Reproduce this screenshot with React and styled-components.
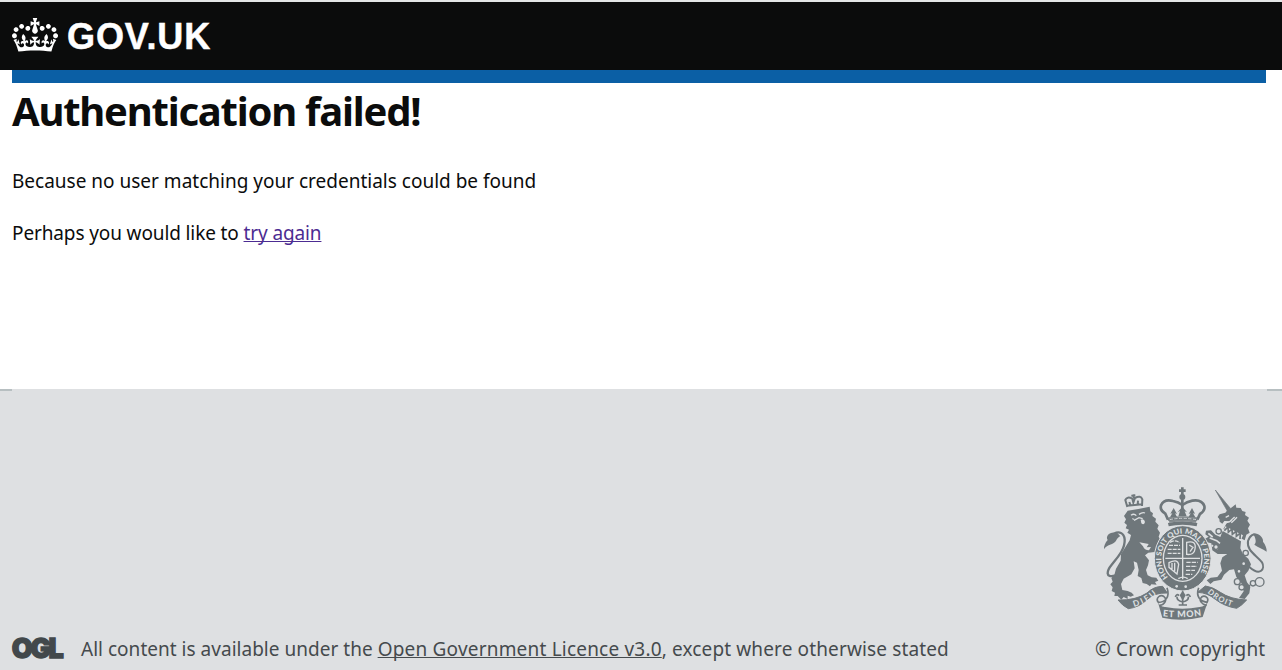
import React from "react";
import styled, { createGlobalStyle } from "styled-components";

const Global = createGlobalStyle`
  body { margin: 0; background: #fff; font-family: "Noto Sans", sans-serif; overflow: hidden; }
`;
const Header = styled.header`
  box-sizing: border-box;
  height: 70px;
  padding-left: 12px;
  display: flex;
  align-items: center;
  gap: 9px;
  background: #0b0c0c;
  border-top: 2px solid #e4e6e6;
`;
const CrownIcon = styled.svg`
  width: 46px;
  height: 34px;
  fill: #fff;
  margin-top: -3px;
`;
const LogoText = styled.span`
  padding-top: 1px;
  font: bold 36px/40px "Liberation Sans", Arial, sans-serif;
  letter-spacing: 0.9px;
  -webkit-text-stroke: 0.5px #fff;
  color: #fff;
`;
const Bar = styled.div`
  height: 13px;
  margin: 0 16px 0 12px;
  background: #0b5fa5;
`;
const Main = styled.main`
  height: 306px;
  padding: 0 12px;
  box-sizing: border-box;
  color: #0b0c0c;
`;
const Title = styled.h1`
  margin: 0;
  font-size: 40px;
  line-height: 56px;
  font-weight: 700;
  letter-spacing: -1.23px;
`;
const Para = styled.p`
  margin: ${(p) => p.$top}px 0 0;
  font-size: 19px;
  line-height: 26px;
  letter-spacing: ${(p) => p.$spacing || 0}px;
`;
const Link = styled.a`
  color: ${(p) => p.$color || "#4c2c92"};
  letter-spacing: ${(p) => (p.$spacing === undefined ? "inherit" : `${p.$spacing}px`)};
  text-decoration: underline;
  text-decoration-thickness: 1px;
  text-decoration-skip-ink: none;
`;
const Footer = styled.footer`
  box-sizing: border-box;
  height: 281px;
  background: #dee0e2;
  display: flex;
  flex-direction: column;
`;
const Edge = styled.div`
  height: 2px;
  display: flex;
  justify-content: space-between;
`;
const EdgePiece = styled.span`
  width: ${(p) => p.$width}px;
  background: #b7bfc1;
`;
const FooterRow = styled.div`
  flex: 1;
  display: flex;
  align-items: flex-end;
  justify-content: space-between;
  padding: 0 7px 8px 12px;
`;
const Licence = styled.div`
  display: flex;
  align-items: center;
  gap: 14px;
`;
const OglMark = styled.svg`
  width: 58px;
  height: 40px;
  margin: -7px 0 -7px -3px;
`;
const FootText = styled.span`
  font-size: 19px;
  line-height: 26px;
  letter-spacing: ${(p) => p.$spacing}px;
  color: #454a4d;
  white-space: nowrap;
`;
const FootTail = styled.span`
  letter-spacing: 0.13px;
`;
const Rights = styled.div`
  display: flex;
  flex-direction: column;
  gap: 11px;
  width: 180px;
`;
const EmblemSvg = styled.svg`
  display: block;
  width: 180px;
  height: 145px;
`;

const INK = "#6f777b";
const PAPER = "#dee0e2";

function Crown() {
  return (
    <CrownIcon viewBox="0 0 132 97" aria-hidden="true">
      <path
        fillRule="evenodd"
        d="M25 30.2c3.5 1.5 7.7-.2 9.1-3.7 1.5-3.6-.2-7.8-3.9-9.2-3.6-1.4-7.6.3-9.1 3.9-1.4 3.5.3 7.5 3.9 9zM9 39.5c3.6 1.5 7.8-.2 9.2-3.7 1.5-3.6-.2-7.8-3.9-9.1-3.6-1.5-7.6.2-9.1 3.8-1.4 3.5.3 7.5 3.8 9zM4.4 57.2c3.5 1.5 7.7-.2 9.1-3.8 1.5-3.6-.2-7.7-3.9-9.1-3.5-1.5-7.6.3-9.1 3.8-1.4 3.5.3 7.6 3.9 9.1zm38.3-21.4c3.5 1.5 7.7-.2 9.1-3.8 1.5-3.6-.2-7.7-3.9-9.1-3.6-1.5-7.6.3-9.1 3.8-1.3 3.6.4 7.7 3.9 9.1zm64.4-5.6c-3.6 1.5-7.8-.2-9.1-3.7-1.5-3.6.2-7.8 3.8-9.2 3.6-1.4 7.7.3 9.2 3.9 1.3 3.5-.4 7.5-3.9 9zm15.9 9.3c-3.6 1.5-7.7-.2-9.1-3.7-1.5-3.6.2-7.8 3.7-9.1 3.6-1.5 7.7.2 9.2 3.8 1.5 3.5-.3 7.5-3.8 9zm4.7 17.7c-3.6 1.5-7.8-.2-9.2-3.8-1.5-3.6.2-7.7 3.9-9.1 3.6-1.5 7.7.3 9.2 3.8 1.3 3.5-.4 7.6-3.9 9.1zM89.3 35.8c-3.6 1.5-7.8-.2-9.2-3.8-1.4-3.6.2-7.7 3.9-9.1 3.6-1.5 7.7.3 9.2 3.8 1.4 3.6-.3 7.7-3.9 9.1zM69.7 17.7l8.9 4.7V9.3l-8.9 2.8c-.2-.3-.5-.6-.9-.9L72.4 0H59.6l3.5 11.2c-.3.3-.6.5-.9.9l-8.8-2.8v13.1l8.8-4.7c.3.3.6.7.9.9l-5 15.4v.1c-.2.8-.4 1.6-.4 2.4 0 4.1 3.1 7.5 7 8.1h.2c.3 0 .7.1 1 .1.4 0 .7 0 1-.1h.2c4-.6 7.1-4.1 7.1-8.1 0-.8-.1-1.7-.4-2.4V34l-5.1-15.4c.4-.2.7-.6 1-.9zM66 92.8c16.9 0 32.8 1.1 47.1 3.2 4-16.9 8.9-26.7 14-33.5l-9.6-3.4c1 4.9 1.1 7.2 0 10.2-1.5-1.4-3-4.3-4.2-8.7L108.6 76c2.8-2 5-3.2 7.5-3.3-4.4 9.4-10 11.9-13.6 11.2-4.3-.8-6.3-4.6-5.6-7.9 1-4.7 5.7-5.9 8-.5 4.3-8.7-3-11.4-7.6-8.8 7.1-7.2 7.9-13.5 2.1-21.1-8 6.1-8.1 12.3-4.5 20.8-4.7-5.4-12.1-2.5-9.5 6.2 3.4-5.2 7.9-2 7.2 3.1-.6 4.3-6.4 7.8-13.5 7.2-10.3-.9-10.9-8-11.2-13.8 2.5-.5 7.1 1.8 11 7.3L80.2 60c-4.1 4.4-8 5.3-12.3 5.4 1.4-4.4 8-11.6 8-11.6H55.5s6.4 7.2 7.9 11.6c-4.2-.1-8-1-12.3-5.4l1.4 16.4c3.9-5.5 8.5-7.7 10.9-7.3-.3 5.8-.9 12.8-11.1 13.8-7.2.6-12.9-2.9-13.5-7.2-.7-5 3.8-8.3 7.1-3.1 2.7-8.7-4.6-11.6-9.4-6.2 3.7-8.5 3.6-14.7-4.6-20.8-5.8 7.6-5 13.9 2.2 21.1-4.7-2.6-11.9.1-7.7 8.8 2.3-5.5 7.1-4.2 8.1.5.7 3.3-1.3 7.1-5.7 7.9-3.5.7-9-1.8-13.5-11.2 2.5.1 4.7 1.3 7.5 3.3l-4.7-15.4c-1.2 4.4-2.7 7.2-4.3 8.7-1.1-3-.9-5.3 0-10.2l-9.5 3.4c5 6.9 9.9 16.7 14 33.5 14.8-2.1 30.8-3.2 47.7-3.2z"
      />
    </CrownIcon>
  );
}

function Ogl() {
  return (
    <OglMark viewBox="0 0 58 40" role="img" aria-label="OGL">
      <text
        x="2.8"
        y="28.6"
        textLength="52"
        lengthAdjust="spacing"
        fontFamily="Inter, sans-serif"
        fontWeight="900"
        fontSize="27"
        fill="#42484b"
        stroke="#42484b"
        strokeWidth="1.3"
      >
        OGL
      </text>
    </OglMark>
  );
}

function Emblem() {
  const motto = { fontFamily: "Lato, sans-serif", fontWeight: 700, fill: PAPER };
  return (
    <EmblemSvg viewBox="0 0 540 435" aria-hidden="true">
      <defs>
        <path id="garter" d="M219 292 A64 76 0 1 1 307 292" />
        <path id="left-ribbon" d="M117 381 Q157 371 190 337" />
        <path id="right-ribbon" d="M337 337 Q370 368 414 380" />
        <path id="base-ribbon" d="M203 409 Q262 416 323 406" />
      </defs>

      {/* lion */}
      <g fill={INK}>
        <path d="M98 92 L130 87 L164 80 L166 94 L174 100 L172 108 L183 116 L181 125 L191 136 L187 146 L195 158 L191 170 L198 184 L207 212 L189 222 L179 216 L160 218 L150 226 L162 241 L159 256 L153 270 L158 286 L170 292 L184 293 L190 302 L180 306 L185 314 L169 313 L165 319 L155 312 L143 309 L139 294 L128 288 L131 270 L126 248 L116 244 L119 265 L109 283 L86 296 L78 312 L82 330 L98 333 L110 338 L117 346 L107 350 L98 347 L98 357 L86 351 L79 359 L68 348 L58 348 L60 338 L50 333 L53 322 L46 313 L53 305 L49 294 L58 285 L63 266 L77 242 L78 222 L91 202 L104 181 L108 165 L97 158 L102 149 L92 145 L96 135 L88 128 L93 118 L87 108 Z" />
        <path d="M178 178 L206 192 L218 181 L211 201 L205 219 L188 215 Z" />
      </g>
      <path d="M62 286 C28 296 36 271 50 254 C66 234 91 208 89 178 C87 158 72 153 57 161" fill="none" stroke={INK} strokeWidth="7" />
      <path d="M68 160 C46 151 30 169 38 180 C31 188 26 198 27 208 C34 197 44 196 55 190 C65 185 65 173 76 169 Z" fill={INK} />
      <path d="M108 106 Q117 99 124 107 M132 103 Q142 96 150 99 M117 121 L132 113 L143 116" fill="none" stroke={PAPER} strokeWidth="4" />
      <path d="M137 119 Q148 115 150 126 Q147 137 139 130 Z M111 114 L119 117 L114 120 Z" fill={PAPER} />
      <path d="M133 187 L161 192 L155 202 L168 201 L162 211 Q148 211 144 199 Z" fill={PAPER} />
      <path d="M97 81 L91 60 Q96 48 112 56 L115 68 L120 54 Q137 45 142 58 L141 78 M96 77 L142 73 M115 43 L117 55 M109 47 L121 46 M103 66 L106 75 M129 62 L128 75" fill="none" stroke={INK} strokeWidth="6" />

      {/* royal crown */}
      <g fill="none" stroke={INK} strokeWidth="8">
        <path d="M219 119 L211 101 Q194 91 198 76 Q207 56 234 63 Q250 66 262 75 Q276 65 292 62 Q320 57 328 78 Q331 92 315 102 L307 119" />
        <path d="M262 58 V108 M262 22 V48 M252 32 H272" />
        <path d="M219 120 Q263 112 307 120" strokeWidth="5" />
        <path d="M220 134 Q262 124 306 134" strokeWidth="10" />
      </g>
      <g fill={INK}>
        <circle cx="262" cy="51" r="9" />
        <path d="M225 112 L232 100 L226 101 L236 84 L246 102 L240 100 L246 111 Z M281 111 L287 100 L281 102 L291 84 L300 101 L294 100 L301 112 Z M250 109 L255 93 L248 97 L262 80 L276 97 L269 94 L275 109 Z" />
        <path d="M220 112 Q263 105 306 112 L303 128 Q263 119 223 128 Z" opacity="0.8" />
      </g>
      <path d="M224 119 Q262 111 303 119" fill="none" stroke={PAPER} strokeWidth="2.5" strokeDasharray="10 4" />

      {/* unicorn */}
      <path d="M361 30 L406 85 L397 93 Z" fill={INK} stroke={INK} strokeWidth="2" />
      <path d="M397 91 L411 82 L422 73 L424 83 L437 84 L442 93 L452 96 L450 105 L462 113 L457 122 L465 134 L459 145 L464 158 L454 164 L449 181 L385 147 L394 131 L403 124 L388 123 L382 131 L374 125 L373 117 L368 111 L374 103 L391 98 Z" fill={INK} />
      <path d="M392 112 L402 107 M390 126 Q403 130 411 118 L419 111 M409 128 L417 121 L426 112" stroke={PAPER} strokeWidth="4" fill="none" />
      <path d="M391 139 L444 166 L437 182 L385 153 Z" fill={PAPER} />
      <path d="M388 152 L399 141 L400 157 L411 147 L412 163 L424 153 L424 169 L436 159 L435 177" fill="none" stroke={INK} strokeWidth="5" />
      <path d="M383 153 L438 184 L436 205 L444 223 L460 236 L468 253 L460 272 L449 286 L456 307 L466 320 L463 340 L449 357 L432 354 L446 334 L439 309 L424 291 L417 268 L403 270 L387 284 L379 299 L356 304 L346 312 L335 301 L347 293 L367 291 L381 272 L376 250 L382 232 L397 222 L368 222 L352 211 L349 190 L336 187 L329 177 L341 170 L331 163 L333 152 L348 151 L361 164 L376 171 Z" fill={INK} />
      <path d="M344 174 L365 182 L375 190 M350 196 L369 207 M340 160 L353 171" stroke={PAPER} strokeWidth="5" fill="none" />
      <path d="M463 261 C497 291 511 266 501 247 C485 226 454 212 459 183 C466 163 476 161 485 166" fill="none" stroke={INK} strokeWidth="6" />
      <path d="M474 161 C495 157 506 177 504 185 C511 194 516 205 515 215 C502 205 491 203 478 194 C485 187 483 175 474 161 Z" fill={INK} />
      <g fill={PAPER} stroke={INK} strokeWidth="4">
        <circle cx="371" cy="154" r="8" />
        <circle cx="363" cy="201" r="7" />
        <circle cx="452" cy="219" r="8" />
        <circle cx="446" cy="251" r="6" />
        <circle cx="432" cy="274" r="6" />
        <circle cx="427" cy="305" r="9" />
        <circle cx="440" cy="322" r="8" />
        <circle cx="474" cy="310" r="8" />
        <circle cx="494" cy="306" r="13" />
        <path d="M436 299 L449 292 M448 318 L465 316" fill="none" />
      </g>

      {/* garter and shield */}
      <ellipse cx="263" cy="235" rx="85" ry="98" fill={INK} stroke={PAPER} strokeWidth="3" />
      <ellipse cx="263" cy="235" rx="60" ry="71" fill={PAPER} />
      <ellipse cx="263" cy="235" rx="56" ry="67" fill={INK} />
      <text {...motto} fontSize="22" fontWeight="900">
        <textPath href="#garter" textLength="322" lengthAdjust="spacingAndGlyphs">HONI SOIT QUI MAL Y PENSE</textPath>
      </text>
      <g fill="none" stroke={PAPER} strokeWidth="4">
        <path d="M263 174 V298 M211 235 H315" />
        <path d="M222 196 H255 M218 208 H256 M218 220 H256 M225 187 Q240 178 254 188" strokeDasharray="12 3" />
        <path d="M275 187 Q305 180 300 207 Q298 226 275 223 Z M283 195 L294 202 L285 215" />
        <path d="M222 248 Q247 235 251 253 L246 282 L222 262 Z M231 249 V267 M239 248 V274" />
        <path d="M274 247 H308 M273 259 H306 M273 271 H300 M272 283 H292" strokeDasharray="13 3" />
        <path d="M250 296 Q265 287 278 296" />
      </g>
      <circle cx="245" cy="319" r="4" fill={PAPER} />
      <circle cx="272" cy="320" r="4" fill={PAPER} />

      {/* motto ribbon */}
      <path d="M69 360 Q121 362 156 339 Q176 319 203 319 L217 339 Q178 337 155 360 Q132 382 100 386 Q83 378 69 360 Z" fill={INK} stroke={INK} strokeWidth="3" />
      <path d="M455 360 Q406 358 376 337 Q352 320 331 318 L308 337 Q337 338 361 358 Q388 379 425 385 Q440 377 455 360 Z" fill={INK} stroke={INK} strokeWidth="3" />
      <path d="M216 323 C226 352 210 367 190 367 C180 354 197 341 207 350 C218 359 209 374 194 376 M311 323 C302 349 314 363 336 367 C344 354 329 344 320 351 C310 360 319 373 335 376" fill="none" stroke={INK} strokeWidth="5" />
      <path d="M188 364 Q194 382 211 381 Q262 391 314 381 Q331 379 338 365 L323 411 Q262 426 202 413 Z" fill={INK} />
      <text {...motto} fontSize="25"><textPath href="#left-ribbon" textLength="79">DIEU</textPath></text>
      <text {...motto} fontSize="23"><textPath href="#right-ribbon" textLength="84">DROIT</textPath></text>
      <text {...motto} fontSize="27" fontWeight="900"><textPath href="#base-ribbon" textLength="117">ET MON</textPath></text>
      <path d="M263 334 V374 M246 350 Q245 362 263 366 Q282 362 280 350 M252 347 Q245 339 241 351 M274 347 Q282 339 286 351 M251 375 H276" fill="none" stroke={INK} strokeWidth="5" />
      <path d="M263 332 L272 346 L263 362 L254 346 Z" fill={INK} />
    </EmblemSvg>
  );
}

export default function App() {
  return (
    <>
      <Global />
      <Header>
        <Crown />
        <LogoText>GOV.UK</LogoText>
      </Header>
      <Bar />
      <Main>
        <Title>Authentication failed!</Title>
        <Para $top={29}>Because no user matching your credentials could be found</Para>
        <Para $top={26} $spacing={-0.12}>
          Perhaps you would like to <Link href="#">try again</Link>
        </Para>
      </Main>
      <Footer>
        <Edge>
          <EdgePiece $width={12} />
          <EdgePiece $width={15} />
        </Edge>
        <FooterRow>
          <Licence>
            <Ogl />
            <FootText $spacing={0.02}>
              All content is available under the{" "}
              <Link href="#" $color="#454a4d" $spacing={0.2}>Open Government Licence v3.0</Link>
              <FootTail>, except where otherwise stated</FootTail>
            </FootText>
          </Licence>
          <Rights>
            <Emblem />
            <FootText $spacing={0.16}>© Crown copyright</FootText>
          </Rights>
        </FooterRow>
      </Footer>
    </>
  );
}
